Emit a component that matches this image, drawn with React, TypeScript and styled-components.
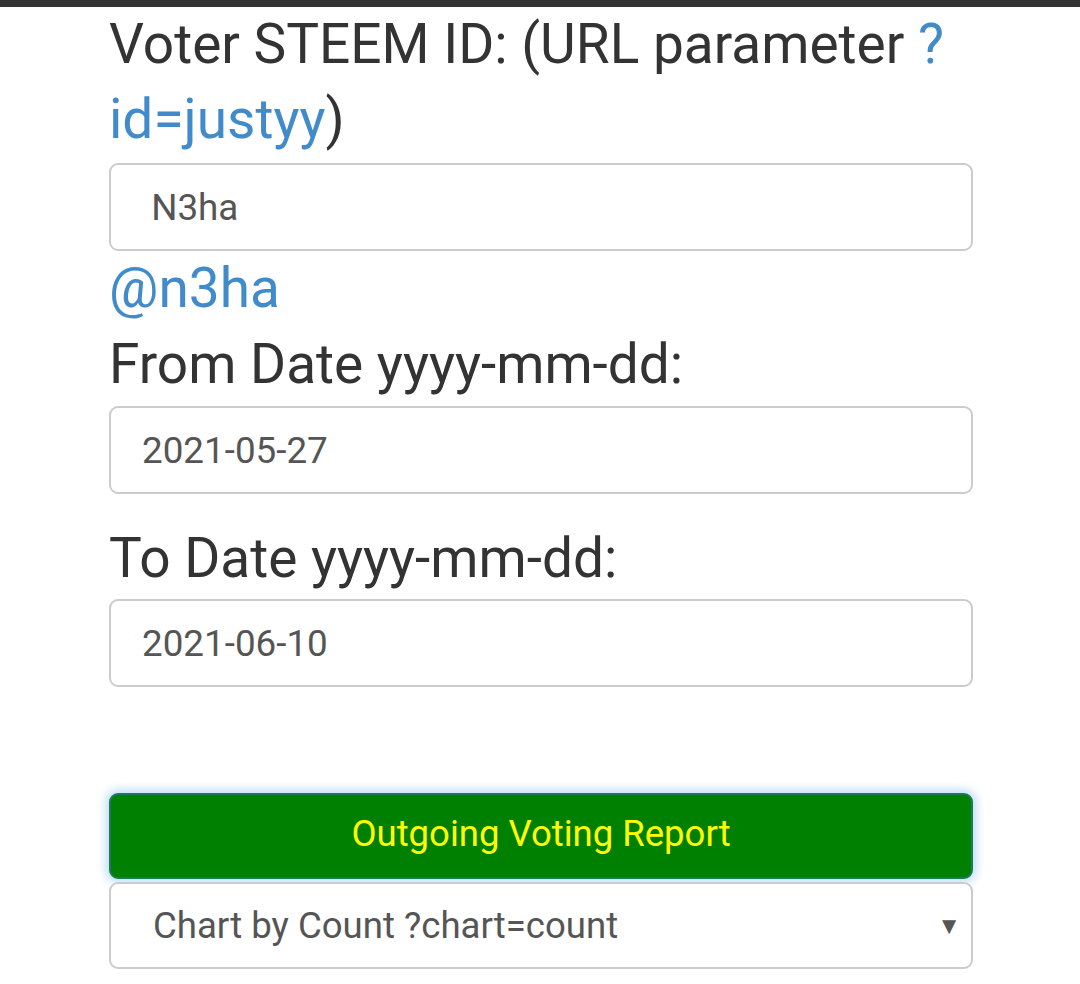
import React from 'react';
import styled, { createGlobalStyle } from 'styled-components';

const GlobalStyle = createGlobalStyle`
  html, body {
    margin: 0;
    padding: 0;
    background: #fff;
  }
  body {
    font-family: Roboto, "Liberation Sans", sans-serif;
    color: #333;
  }
`;

const TopBar = styled.div`
  height: 7px;
  background: #333;
`;

const Form = styled.form`
  display: flex;
  flex-direction: column;
  margin: 0 107px 0 109px;
`;

const Label = styled.div<{ $gapTop?: number }>`
  font-size: 55px;
  line-height: 75px;
  color: #333;
  margin-top: ${({ $gapTop }) => $gapTop ?? 0}px;
`;

const Link = styled.a`
  color: #428bca;
  text-decoration: none;
`;

const TextInput = styled.input<{ $gapTop?: number }>`
  box-sizing: border-box;
  width: 100%;
  height: 88px;
  margin: ${({ $gapTop }) => $gapTop ?? 4}px 0 0 0;
  padding: 0 31px;
  font-family: Roboto, "Liberation Sans", sans-serif;
  font-size: 36.8px;
  color: #555;
  background: #fff;
  border: 2px solid #ccc;
  border-radius: 9px;
  outline: none;
`;

const UserLink = styled(Link)`
  display: block;
  font-size: 55px;
  line-height: 75px;
`;

const ReportButton = styled.button`
  box-sizing: border-box;
  width: 100%;
  height: 86px;
  margin-top: 106px;
  padding: 0 0 6px;
  font-family: Roboto, "Liberation Sans", sans-serif;
  font-size: 36.5px;
  color: #ffff00;
  background: #008000;
  border: 2px solid #1c7a5a;
  border-radius: 9px;
  box-shadow: 0 0 10px 3px rgba(102, 175, 233, 0.45);
  cursor: pointer;
`;

const SelectWrap = styled.div`
  position: relative;
  margin-top: 3px;
`;

const Select = styled.select`
  box-sizing: border-box;
  width: 100%;
  height: 87px;
  padding: 0 60px 0 42px;
  font-family: Roboto, "Liberation Sans", sans-serif;
  font-size: 36.6px;
  color: #555;
  background: #fff;
  border: 2px solid #ccc;
  border-radius: 9px;
  appearance: none;
  outline: none;
`;

const Caret = styled.span`
  position: absolute;
  right: 12px;
  top: 50%;
  transform: translateY(-50%);
  font-size: 24px;
  color: #555;
  pointer-events: none;
`;

export default function App() {
  return (
    <>
      <GlobalStyle />
      <TopBar />
      <Form onSubmit={(e) => e.preventDefault()}>
        <Label>
          Voter STEEM ID: (URL parameter <Link href="#">?id=justyy</Link>)
        </Label>
        <TextInput $gapTop={6} defaultValue=" N3ha" />
        <UserLink href="#">@n3ha</UserLink>
        <Label $gapTop={1}>From Date yyyy-mm-dd:</Label>
        <TextInput defaultValue="2021-05-27" />
        <Label $gapTop={27}>To Date yyyy-mm-dd:</Label>
        <TextInput $gapTop={3} defaultValue="2021-06-10" />
        <ReportButton type="submit">Outgoing Voting Report</ReportButton>
        <SelectWrap>
          <Select defaultValue="count">
            <option value="count">Chart by Count ?chart=count</option>
            <option value="rshares">Chart by Rshares ?chart=rshares</option>
          </Select>
          <Caret>▼</Caret>
        </SelectWrap>
      </Form>
    </>
  );
}
